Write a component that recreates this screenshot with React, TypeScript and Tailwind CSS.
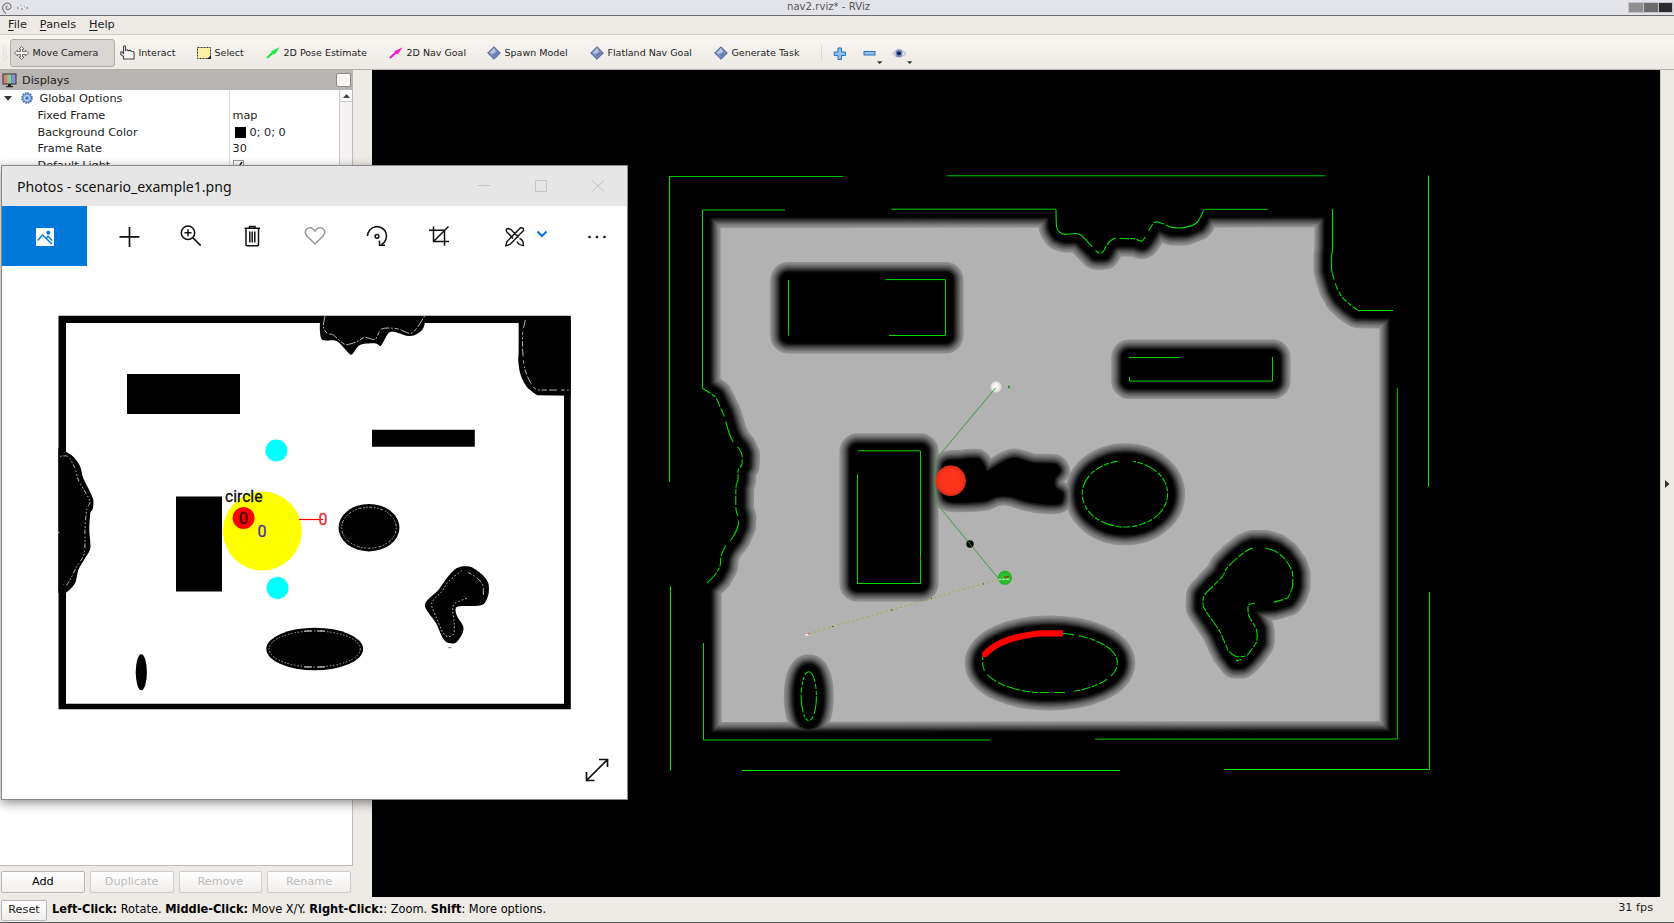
import React from "react";

type Pt = [number, number];

/* Catmull-Rom smoothing through a list of points. */
function smooth(pts: Pt[], closed = false): string {
  const n = pts.length;
  const at = (i: number): Pt =>
    closed ? pts[(i + n) % n] : pts[Math.max(0, Math.min(n - 1, i))];
  let d = `M${pts[0][0]} ${pts[0][1]}`;
  const last = closed ? n : n - 1;
  for (let i = 0; i < last; i++) {
    const [a, b, c, e] = [at(i - 1), at(i), at(i + 1), at(i + 2)];
    const k = 7;
    d += `C${b[0] + (c[0] - a[0]) / k} ${b[1] + (c[1] - a[1]) / k} ${c[0] - (e[0] - b[0]) / k} ${c[1] - (e[1] - b[1]) / k} ${c[0]} ${c[1]}`;
  }
  return closed ? d + "Z" : d;
}

/* ---------- costmap geometry ---------- */

const LEFT_COAST: Pt[] = [
  [707, 583], [715, 575], [720, 566], [721, 556], [725, 547], [733, 537], [738, 526], [738.5, 518],
  [736, 509], [736, 487], [738, 480], [738.3, 470], [741.7, 465], [742, 455], [739.3, 449],
  [733, 441.7], [728.7, 431.7], [725.3, 420], [723, 413], [720, 406.7], [715, 396.7], [702.5, 388.3],
];
const TOP_BLOB: Pt[] = [
  [1056, 209.5], [1056.6, 227], [1060, 232.5], [1065, 234.4], [1080, 234.5], [1097, 251.8],
  [1103, 251.8], [1107, 244.5], [1114, 238.6], [1127, 238.6], [1135, 238.8], [1142, 241], [1147, 234], [1154, 222.5],
  [1161, 223], [1172, 227.4], [1185, 227.4], [1197, 222.5], [1204, 209.5],
];
const CORNER: Pt[] = [
  [1332.5, 209], [1332.5, 248], [1331.6, 256], [1331.6, 270], [1334, 279], [1337, 288], [1342, 297], [1350, 304.5], [1358, 310.2], [1397.5, 310.5],
];
const line = (p: Pt[]) => p.map(([x, y]) => `L${x} ${y}`).join("");
const OUTSIDE =
  "M372 70H1660V897H372Z M702.5 209.7" +
  line(TOP_BLOB) + line(CORNER) + "L1397.5 739L703.5 740L703.5 585" + line(LEFT_COAST) + "Z";

const BEAN: Pt[] = [
  [1252.7, 548], [1246.7, 550.7], [1236.7, 558.3], [1226.7, 568.3], [1222.3, 576.7], [1213.3, 585.7],
  [1204, 596], [1203.7, 607.3], [1213.3, 621.7], [1220, 631.7], [1225, 643.3], [1229.3, 651.7],
  [1236, 656.5], [1246, 656], [1251.7, 649.3], [1256.7, 641.7], [1256.5, 630], [1250, 618.3], [1248.3, 613.3],
  [1248.5, 605], [1255, 603.3], [1273.5, 602.3], [1286.7, 598.3], [1290, 593.3], [1292.5, 586.7], [1292.5, 573.3],
  [1290, 566.7], [1283.3, 557.3], [1275, 551], [1265, 548],
];
const BEAN_OUTLINE: Pt[] = [...BEAN.slice(0, 12), [1236, 660.5], [1241, 660.5], ...BEAN.slice(13)];
const BEAN_LEFT = smooth(BEAN.slice(0, 21));
const BEAN_RIGHT = smooth(BEAN.slice(21));

const TRAIL = smooth(
  [
    [943.3, 463.3], [960, 459.5], [978, 458.5], [985, 466.5], [988, 471], [1003, 462], [1015, 458], [1033, 463],
    [1055, 464], [1060.5, 471], [1055, 478.5], [1055.3, 487], [1063, 493], [1061, 503], [1048, 504.5], [1027, 501.5],
    [1010, 496.5], [997, 496.5], [983, 501.5], [950, 502], [942, 493],
  ],
  true,
);

const LEVELS: { r: number; c: string }[] = [
  { r: 18, c: "#8e8e8e" }, { r: 16.8, c: "#848484" }, { r: 15.6, c: "#777777" }, { r: 14.4, c: "#676767" },
  { r: 13.2, c: "#555555" }, { r: 12, c: "#424242" }, { r: 10.8, c: "#2d2d2d" }, { r: 9.6, c: "#181818" },
  { r: 8.4, c: "#080808" }, { r: 7.2, c: "#000000" },
];

function Obstacles({ r, c }: { r: number; c: string }) {
  return (
    <g fill={c} stroke={c} strokeWidth={r * 2} strokeLinejoin="round">
      <path d={OUTSIDE} fillRule="evenodd" />
      <rect x="788.3" y="280" width="157.2" height="55.5" />
      <rect x="857.5" y="451.3" width="63" height="132.2" />
      <rect x="1129.3" y="357.5" width="143.2" height="23.5" />
      <ellipse cx="1125" cy="494.2" rx="42" ry="33" />
      <ellipse cx="1050" cy="663" rx="67.3" ry="29.5" />
      <ellipse cx="808.8" cy="696.4" rx="7" ry="24" />
      <path d={line(BEAN_OUTLINE).replace("L", "M") + "Z"} />
      <path d={TRAIL} strokeWidth={Math.max(0, (r - 8.4) * 2)} />
    </g>
  );
}

function Costmap() {
  return (
    <svg className="block h-full w-full bg-black" viewBox="372 70 1288 827">
      <defs>
        <radialGradient id="robot"><stop offset="0" stopColor="#ff3518" /><stop offset=".75" stopColor="#f8321b" /><stop offset="1" stopColor="#dc2c18" /></radialGradient>
        <radialGradient id="start"><stop offset="0" stopColor="#fff" /><stop offset=".6" stopColor="#ececec" /><stop offset="1" stopColor="#cfcfcf" /></radialGradient>
        <radialGradient id="goal"><stop offset="0" stopColor="#2fcb35" /><stop offset=".8" stopColor="#29bb2e" /><stop offset="1" stopColor="#259c29" /></radialGradient>
      </defs>
      <rect x="700" y="208" width="699" height="533" fill="#b2b2b2" />
      {LEVELS.map((l) => <Obstacles key={l.r} r={l.r} c={l.c} />)}
      <path d={OUTSIDE} fill="#000" fillRule="evenodd" />

      {/* laser map edges */}
      <g fill="none" stroke="#00d800" strokeWidth="1">
        <path stroke="#00e600" d="M669.5 481.7V176.4M1428.5 175.5V487M1429.5 592V769.5M670.5 586V770.8M742 770.5H1120M1224 769.5H1429.5" />
        <path stroke="#00c000" d="M669.5 176.5H843" />
        <path stroke="#00d000" d="M947 175.8H1325M702.5 210H785M891 209.2H1056M1204.5 209.3H1267.5M703.5 740H990M1095 739.1H1397.5" />
        <path stroke="#00e000" d="M702.5 210V388.3M703.5 643V740" />
        <path stroke="#00c800" d="M1397.4 388V739" />
        <path d="M788.5 280V335.5M885.5 279.6H945.5M945.5 280V335.5H889" />
        <path d="M858 450.8H920.7M920.5 451V583.5H857.5V474" />
        <path d="M1129 357.5H1180M1272.5 357V381M1272.5 381.1H1129.5V377" />
      </g>
      <g fill="none" stroke="#00dc00" strokeWidth="1.1">
        <path d={smooth(LEFT_COAST)} strokeDasharray="14 1.500 4 1.500 9 2 12 6 22 5 9 2 9 1.500 5 1.500" />
        <path d={smooth(TOP_BLOB)} strokeDasharray="62 5 5 1.500 9 1.500 11 4 9 1.500 5 1.500 11 7 8 1.500 11 2" />
        <path d={smooth(CORNER.slice(0, 9))} strokeDasharray="71 4 7 2 5 1.500 6 1.500 5 1.500 6 1.500" />
        <path d="M1358 310.5H1393" />
        <path d="M1117.5 461.4A43 33 0 0 0 1082.2 494A43 33 0 0 0 1125 527A43 33 0 0 0 1167.6 494A43 33 0 0 0 1133.5 461.4" strokeDasharray="7 2 5 1.500 8 1.500 5 2 14 1.500 6 1.500" />
        <path d="M1063 633.5A67.3 29.5 0 0 1 1117.3 663A67.3 29.5 0 0 1 1074 691.2M1065 692.5H1035A67.3 29.5 0 0 1 982.7 663V656" strokeDasharray="11 5 9 2 6 1.500 9 1.500 14 1.500 8 2" />
        <ellipse cx="808.8" cy="696.2" rx="7.6" ry="24.5" strokeDasharray="18 2 5 2 4 1.500 3 2" />
        <path d={BEAN_LEFT} strokeDasharray="9 1.500 6 1.500 12 1.500 5 1.500" />
        <path d={BEAN_RIGHT} strokeDasharray="10 1.500 8 1.500 14 2 6 1.500" />
        <path d="M1236 660.5H1239M1239.5 659.6H1241.5" strokeWidth="1.4" />
      </g>

      {/* active scan */}
      <path d="M985 654.3C995 643 1014 636 1040 633.4H1063" fill="none" stroke="#f00" strokeWidth="6.2" strokeLinejoin="round" />
      <circle cx="985" cy="654.2" r="3" fill="#f00" />

      {/* robot, start, goal */}
      <circle cx="996" cy="386.8" r="5.8" fill="url(#start)" />
      <path d="M995.5 388L938 457L935.3 464L934.6 470V492L937 504L998 578" fill="none" stroke="#2f9a35" strokeWidth=".9" />
      <circle cx="950.7" cy="480.8" r="15.2" fill="url(#robot)" />
      <path d="M934.6 470V492" stroke="#30a030" strokeWidth=".8" />
      <path d="M1008.3 385.3L1010 386L1009.3 388.5H1008.3Z" fill="#159015" />
      <circle cx="970" cy="544" r="3.7" fill="#000" />
      <path d="M968 541.5L972 546.5" stroke="#2f9a35" strokeWidth=".9" />
      <path d="M809 633.5L998 579.500" stroke="#b0a420" strokeWidth="1.100" strokeDasharray="1.600 3.400" />
      <path d="M832 626.5h1M891 610h1.3M931 598.5h1M983 584h1" stroke="#333" strokeWidth="1" />
      <path d="M805.5 634.8h3" stroke="#fff" strokeWidth="1.4" /><path d="M807.5 633.6h2" stroke="#e0457a" />
      <circle cx="1005" cy="577.7" r="7" fill="url(#goal)" />
      <path d="M998.5 579.4h11" stroke="#c8f5c8" strokeWidth="1" strokeDasharray="3 .8" />
      <path d="M1004 577.3L1009 576.3" stroke="#c02010" strokeWidth="1.2" />
      <path d="M919.5 558.5h2" stroke="#d00000" />
    </svg>
  );
}

/* ---------- picture shown in the photo viewer (authored at 3x) ---------- */

const P_LEFT: Pt[] = [[55, 445], [78, 455], [100, 470], [120, 498], [130, 535], [150, 575], [160, 600], [158, 628], [151, 640], [148, 690], [151, 745], [135, 775], [115, 810], [105, 850], [78, 878], [55, 878]];
const P_LEFT_DASH: Pt[] = [[60, 469], [85, 470], [105, 505], [115, 540], [135, 575], [150, 605], [140, 630], [135, 690], [133, 760], [110, 800], [95, 830], [80, 855], [70, 853]];
const P_TOP: Pt[] = [[60, 60], [60, 95], [68, 120], [110, 123], [148, 161], [158, 161], [180, 135], [225, 130], [243, 137], [265, 100], [285, 96], [320, 107], [345, 105], [368, 88], [377, 60]];
const P_TOP_DASH: Pt[] = [[75, 48], [70, 80], [82, 100], [100, 105], [135, 133], [170, 125], [195, 112], [225, 118], [245, 87], [290, 86], [330, 100], [350, 85], [374, 48]];
const P_CORNER: Pt[] = [[656, 60], [656, 150], [655, 185], [662, 225], [680, 260], [712, 286]];
const P_CORNER_DASH: Pt[] = [[676, 60], [668, 100], [668, 150], [674, 205], [690, 245], [708, 268], [740, 270], [812, 270]];
const P_BEAN: Pt[] = [[490, 799], [465, 808], [440, 835], [415, 870], [380, 903], [377, 925], [408, 970], [425, 1008], [440, 1027], [466, 1029], [485, 1005], [490, 980], [470, 945], [472, 920], [535, 917], [555, 908], [566, 880], [565, 850], [548, 825], [515, 802]];
const P_BEAN_DASH: Pt[] = [[485, 812], [445, 845], [425, 875], [395, 910], [410, 955], [430, 1000], [445, 1010], [462, 1000], [462, 960], [458, 930], [465, 910], [505, 893]];

function ScenarioPicture() {
  const ink = "#020203";
  return (
    <svg className="block h-full w-full" viewBox="2 266 625 533">
      <path d="M58.5 315.7H570.8V709.3H58.5ZM66 323V703.7H564V323Z" fill={ink} fillRule="evenodd" />
      <path d="M127 374h113v40H127zM176 496.5h46v95h-46zM372 429.8h102.8v17H372z" fill="#000" />
      <g transform="translate(40 300) scale(.33333)">
        <path d={smooth(P_LEFT)} fill={ink} />
        <path d={smooth(P_LEFT_DASH)} fill="none" stroke="#d4d4d4" strokeWidth="2.6" strokeDasharray="5 5 14 8 4 6" />
        <path d="M53 697h5" stroke="#ddd" strokeWidth="3" />
      </g>
      <g transform="translate(300 300) scale(.33333)">
        <path d={smooth(P_TOP)} fill={ink} />
        <path d={smooth(P_CORNER) + "L812 287V60Z"} fill={ink} />
        <path d={smooth(P_BEAN, true)} fill={ink} />
        <g fill="none" stroke="#d4d4d4" strokeWidth="2.6">
          <path d={smooth(P_TOP_DASH)} strokeDasharray="28 5 5 6 12 6" />
          <path d={smooth(P_CORNER_DASH)} strokeDasharray="24 12 10 8 5 5 16 6" />
          <path d={smooth(P_BEAN_DASH)} strokeDasharray="5 6" />
          <path d="M550 885V860Q542 835 505 818" strokeDasharray="20 8 5 6" />
          <path d="M445 1043h8" stroke="#555" />
        </g>
      </g>
      <g fill={ink}>
        <ellipse cx="369" cy="527.7" rx="30.5" ry="23.7" />
        <ellipse cx="314.7" cy="649" rx="48.4" ry="21.3" />
        <ellipse cx="141.3" cy="672.3" rx="5.6" ry="18" />
      </g>
      <g fill="none" stroke="#bdbdbd" strokeWidth=".9">
        <ellipse cx="369" cy="527.7" rx="27.3" ry="20.5" strokeDasharray="1.5 1.5 3 2 1.5 1.5" />
        <ellipse cx="314.7" cy="649" rx="45.6" ry="18" strokeDasharray="1.5 1.5 1.5 2" />
        <path d="M304.5 631h7M317.5 631h7M304.5 667h7M317.5 667h7" stroke="#eee" strokeWidth="1.1" />
      </g>
      <circle cx="276.4" cy="450.5" r="11" fill="#0ff" />
      <circle cx="277.5" cy="588" r="11" fill="#0ff" />
      <circle cx="262.3" cy="531" r="39.4" fill="#ff0" />
      <circle cx="243.6" cy="518" r="11" fill="#f00" />
      <path d="M299 519.5H323" stroke="#f00" strokeWidth="1.2" />
      <g fontFamily="Roboto, sans-serif" fontSize="16" strokeWidth=".3">
        <text x="225" y="501.8" textLength="37.5" lengthAdjust="spacingAndGlyphs" fill="#0b0b0b" stroke="#0b0b0b">circle</text>
        <text x="239" y="523.8" fill="#3a0000" stroke="#3a0000">0</text>
        <text x="257.5" y="536.8" fill="#4334a0" stroke="#4334a0">0</text>
        <text x="318.5" y="524.6" fill="#e32d2d" stroke="#e32d2d">0</text>
      </g>
    </svg>
  );
}

/* ---------- photo viewer ---------- */

const stroke = { fill: "none", stroke: "#111", strokeWidth: 1.5 } as const;

function PhotosToolbar() {
  return (
    <div className="flex h-[60px] shrink-0 items-start">
      <div className="flex h-[60px] w-[85px] items-center justify-center bg-[#0078d9] pt-[2px]">
        <svg width="18" height="18" viewBox="0 0 18 18">
          <rect width="18" height="18" rx="1" fill="#fff" />
          <path d="M1.7 12.5L6.5 7L16 16M10 10.5L12 8.3L16.3 12.5" fill="none" stroke="#0078d9" strokeWidth="1.4" />
          <circle cx="12.3" cy="4.7" r="2" fill="#0078d9" />
        </svg>
      </div>
      <svg className="block" width="540" height="60" viewBox="87 206 540 60">
        <g {...stroke}>
          <path d="M119.5 236.8H139.5M129.5 227V247" strokeWidth="1.7" />
          <circle cx="188" cy="232.7" r="6.7" /><path d="M192.8 237.6L200.7 245.6M184.5 232.7h7M188 229.2v7" />
          <path d="M244.5 228.3H260M249.5 228V226.5H255V228M246 228.5V244.8Q246 245.7 247 245.7H257.5Q258.5 245.7 258.5 244.8V228.5M249.8 231.5V242.5M252.2 231.5V242.5M254.8 231.5V242.5" />
          <path d="M315 244L307 236Q303.8 232 306.5 229Q311 225.5 315 231Q319 225.5 323.5 229Q326.2 232 323 236Z" stroke="#999" />
          <path d="M367.5 236A9.5 9.5 0 1 1 381.5 244.5M379.5 240.5V245.2H385" />
          <circle cx="377" cy="236.3" r="1.9" />
          <path d="M429 230.3H444.5V245.8M433.5 226.5V241.5H449M434 241L448.5 226.5" />
          <path d="M506.500 231.500Q505.500 228.500 508.500 228.500L511 229.500L518.500 237.500M513 238.500L506.500 231.500M519.500 238.500Q523.500 239.500 523.500 245.500Q519 245.500 517 241.500M523.500 230.500L510 244.500L505.800 245.800L507 241.500L520.500 227.800Q524 227.500 523.500 230.500Z" strokeWidth="1.4" />
          <path d="M537.5 231.5L542 236L546.5 231.500" stroke="#0078d9" strokeWidth="2" />
        </g>
        <g fill="#111"><circle cx="589.5" cy="237" r="1.3" /><circle cx="597" cy="237" r="1.3" /><circle cx="604.5" cy="237" r="1.3" /></g>
      </svg>
    </div>
  );
}

function PhotosWindow() {
  return (
    <div className="absolute left-[1px] top-[165px] flex h-[635px] w-[627px] flex-col border border-[#8a8a8a] bg-white font-['Noto_Sans',sans-serif] shadow-[0_3px_10px_rgba(0,0,0,0.45)]">
      <div className="flex h-[40px] shrink-0 items-center justify-between bg-[#e6e6e6] pl-[15px]">
        <span className="whitespace-nowrap pt-[2px] text-[14.1px] text-[#111]">Photos - scenario_example1.png</span>
        <svg width="150" height="40" viewBox="477 166 150 40" fill="none" stroke="#c4c4c4">
          <path d="M478 185.5H490M535.5 180.5H546.5V191.5H535.5ZM592 180.5L604 191.5M604 180.5L592 191.5" />
        </svg>
      </div>
      <PhotosToolbar />
      <div className="relative min-h-0 flex-1">
        <ScenarioPicture />
        <svg className="absolute bottom-[17px] right-[18px]" width="24" height="24" viewBox="0 0 24 24" {...stroke} strokeWidth={1.7}>
          <path d="M2 22L22 2M14 1.5H22.5V9M1.5 14V22.5H9.5" />
        </svg>
      </div>
    </div>
  );
}

/* ---------- RViz chrome ---------- */

const Gem = () => (
  <svg width="14" height="14" viewBox="0 0 14 14">
    <path d="M7 .7L13.3 7L7 13.3L.7 7Z" fill="#7d92c0" stroke="#3e4f7e" strokeWidth=".9" />
    <path d="M7 2L9 6L6 8L2.5 7Z" fill="#b7c4e2" /><path d="M9 6L12 7L7 12L6 8Z" fill="#6a80b3" />
  </svg>
);
const Arrow = ({ c }: { c: string }) => (
  <svg width="14" height="12" viewBox="0 0 14 12"><path d="M1 11L7 5.5" stroke={c} strokeWidth="2.2" /><path d="M5 4.6L13.7 .3L8.6 7.6Z" fill={c} /></svg>
);
const Move = () => (
  <svg width="15" height="14" viewBox="0 0 15 14" fill="#f4f4f4" stroke="#555" strokeWidth=".8">
    <path d="M7.5 .5L10 3H8.5V5.5H11.5V4L14.5 7L11.5 10V8.5H8.5V11H10L7.5 13.5L5 11H6.5V8.5H3.5V10L.5 7L3.5 4V5.5H6.5V3H5Z" />
  </svg>
);
const Hand = () => (
  <svg width="15" height="15" viewBox="0 0 15 15"><path d="M3.5 9V1.5Q4.5 .3 5.5 1.5V5.5L7 4.8L8.500 5.800L10 5.2L11.5 6.2L13.5 6.5Q14.5 8 14 11V14H3.5V11.5L.8 9.5V7H2.500Z" fill="#f5f5f5" stroke="#444" strokeWidth="1.1" /></svg>
);
const SelectIcon = () => (
  <svg width="14" height="12" viewBox="0 0 14 12"><rect x=".5" y=".5" width="13" height="11" fill="#fbf0a4" stroke="#333" strokeDasharray="2 1" /><path d="M14 8V12H10Z" fill="#222" /></svg>
);

function Tool({ icon, label, className }: { icon: React.ReactNode; label: string; className: string }) {
  return (
    <div className={`flex h-[28px] shrink-0 items-center gap-[3.5px] whitespace-nowrap text-[9.5px] ${className}`}>
      {icon}
      <span className="pt-px">{label}</span>
    </div>
  );
}

function Toolbar() {
  return (
    <div className="flex h-[35px] shrink-0 items-center border-b border-[#b4b1ad] bg-linear-to-b from-[#f9f6f1] to-[#edeae6] pt-px">
      <svg className="ml-[3px] mr-[3px] shrink-0" width="4" height="16" viewBox="0 0 4 16">
        <path d="M.5 0V16M3 1V16" stroke="#cfcbc6" strokeDasharray="1 1.500" />
      </svg>
      <Tool icon={<Move />} label="Move Camera" className="w-[105px] rounded-[3px] border border-[#b0aca8] bg-[#dad6d3] pl-[3px]" />
      <Tool icon={<Hand />} label="Interact" className="w-[77px] pl-[5px]" />
      <Tool icon={<SelectIcon />} label="Select" className="w-[69px] pl-[5px]" />
      <Tool icon={<Arrow c="#18e53a" />} label="2D Pose Estimate" className="w-[123px] pl-[5px]" />
      <Tool icon={<Arrow c="#f016c8" />} label="2D Nav Goal" className="w-[99px] pl-[5px]" />
      <Tool icon={<Gem />} label="Spawn Model" className="w-[103px] pl-[4px]" />
      <Tool icon={<Gem />} label="Flatland Nav Goal" className="w-[124px] pl-[4px]" />
      <Tool icon={<Gem />} label="Generate Task" className="w-[111px] pl-[4px]" />
      <div className="h-[16px] w-px bg-[#dcd8d4]" />
      <svg width="100" height="28" viewBox="822.5 38 100 28">
        <path d="M838.5 47H842V51H846V54.5H842V58.5H838.5V54.5H834.7V51H838.5Z" fill="#8fc0ee" stroke="#2f6fb5" />
        <rect x="864.5" y="50.5" width="11" height="3.5" fill="#8fc0ee" stroke="#2f6fb5" />
        <path d="M877.5 60.2H883L880.2 63ZM907.5 60.2H913L910.2 63Z" fill="#333" />
        <path d="M893 52.5Q899.5 44.5 906.5 52.5Q899.5 60 893 52.5Z" fill="#eee" stroke="#b0b0b8" />
        <circle cx="899.5" cy="52.3" r="3.6" fill="#6f86c2" /><circle cx="899.5" cy="52.3" r="1.9" fill="#141b45" />
      </svg>
    </div>
  );
}

function Row({ name, children }: { name: string; children?: React.ReactNode }) {
  return (
    <div className="flex h-[16.67px] items-center">
      <div className="flex h-full w-[230px] shrink-0 items-center border-r border-[#dedede] pl-[37.5px] pt-px">{name}</div>
      <div className="flex items-center pl-[2.5px] pt-px">{children}</div>
    </div>
  );
}

function DisplaysPanel() {
  const button = "flex h-[22px] flex-1 items-center justify-center rounded-[2px] border bg-linear-to-b from-white to-[#f1efed]";
  return (
    <div className="flex w-[353px] shrink-0 flex-col">
      <div className="flex h-[20px] shrink-0 items-center bg-[#b8b4b1] pl-[2px] pr-[2px]">
        <svg width="15" height="15" viewBox="0 0 15 15">
          <rect x=".5" y=".5" width="14" height="11" fill="#333" />
          <path d="M1.500 1.500h4.500v9H1.500z" fill="#d98080" /><path d="M5.500 1.500h4v9h-4z" fill="#84d08a" /><path d="M9.500 1.500h4v9h-4z" fill="#8d8ee0" />
          <path d="M6 11h3v2h2v1.3H4V13h2z" fill="#222" />
        </svg>
        <span className="ml-[5px] pt-px">Displays</span>
        <div className="ml-auto h-[14px] w-[15px] rounded-[2px] border border-[#8f8c89] bg-[#f6f5f4]" />
      </div>
      <div className="flex min-h-0 flex-1 border-b border-r border-[#bcbab8] bg-white">
        <div className="flex-1">
          <div className="flex h-[16.67px] items-center">
            <div className="flex h-full w-[230px] items-center border-r border-[#dedede] pl-[4px]">
              <svg width="8" height="5" viewBox="0 0 8 5"><path d="M0 0H8L4 4.7Z" fill="#333" /></svg>
              <svg className="ml-[9px]" width="12" height="12" viewBox="0 0 12 12">
                <circle cx="6" cy="6" r="5" fill="#79a3dd" stroke="#3f6db5" strokeDasharray="1.6 1" strokeWidth="1.6" />
                <circle cx="6" cy="6" r="2.6" fill="none" stroke="#dce9fa" strokeWidth=".8" /><circle cx="6" cy="6" r="1.1" fill="#3465ad" />
              </svg>
              <span className="ml-[6.5px] pt-px">Global Options</span>
            </div>
          </div>
          <Row name="Fixed Frame">map</Row>
          <Row name="Background Color"><span className="ml-[2px] mr-[4px] h-[11px] w-[11px] bg-black" />0; 0; 0</Row>
          <Row name="Frame Rate">30</Row>
          <Row name="Default Light">
            <svg width="11" height="11" viewBox="0 0 11 11"><rect x=".5" y=".5" width="10" height="10" fill="#fff" stroke="#999" /><path d="M3 5L5 8L9 2" fill="none" stroke="#222" strokeWidth="1.5" /></svg>
          </Row>
        </div>
        <div className="h-[700px] w-[13px] border-l border-[#c9c7c5] bg-[#f4f3f2]">
          <div className="flex h-[12px] items-center justify-center border-b border-[#c9c7c5] bg-[#fafafa]">
            <svg width="7" height="4" viewBox="0 0 7 4"><path d="M0 4H7L3.5 0Z" fill="#444" /></svg>
          </div>
        </div>
      </div>
      <div className="flex h-[31px] shrink-0 items-start gap-[5px] pl-px pr-[2px] pt-[5px]">
        <div className={`${button} border-[#b9b6b3] text-black`}>Add</div>
        <div className={`${button} border-[#cfccc9] text-[#bdbbb9]`}>Duplicate</div>
        <div className={`${button} border-[#cfccc9] text-[#bdbbb9]`}>Remove</div>
        <div className={`${button} border-[#cfccc9] text-[#bdbbb9]`}>Rename</div>
      </div>
    </div>
  );
}

export default function App() {
  return (
    <div className="relative flex h-[923px] w-[1674px] flex-col overflow-hidden bg-[#eeebe7] font-['DejaVu_Sans',sans-serif] text-[11.25px] leading-none text-[#1c1c1c]">
      <div className="flex h-[16px] shrink-0 items-center border-b border-[#6b6b6b] bg-[#e3e4ea] pl-[2px] pr-[1px]">
        <svg width="10" height="12" viewBox="0 0 10 12" fill="none" stroke="#777" strokeWidth="1.1"><path d="M4 11.5Q-.5 8 1 4Q3 .5 6.5 1Q9.7 2.5 9 5.5Q7 8.5 4.5 7.2Q3.3 5 5.5 3.8" /></svg>
        <svg className="ml-[5px]" width="12" height="5" viewBox="0 0 12 5"><path d="M0 3h2M3 1h1M4 4h2M7 2h1M9 3h2" stroke="#777" /><path d="M2 2h2M6 3h2M8 1h1" stroke="#fff" /></svg>
        <span className="ml-[758px] text-[10.15px] text-[#555]">nav2.rviz* - RViz</span>
        <div className="ml-auto flex gap-px border border-[#c4c4c8] bg-[#c4c4c8]">
          <div className="h-[9px] w-[14px] bg-[#909090]" />
          <div className="h-[9px] w-[14px] bg-[#6b6b6b]" />
          <div className="h-[9px] w-[13px] bg-[#2c2c2c]" />
        </div>
      </div>
      <div className="flex h-[19px] shrink-0 items-center gap-[13px] border-b border-[#cfccc7] pl-[8px] text-[11.25px]">
        <span><span className="underline underline-offset-2">F</span>ile</span>
        <span><span className="underline underline-offset-2">P</span>anels</span>
        <span><span className="underline underline-offset-2">H</span>elp</span>
      </div>
      <Toolbar />
      <div className="flex h-[827px] shrink-0">
        <DisplaysPanel />
        <div className="w-[19px] shrink-0" />
        <div className="w-[1288px] shrink-0"><Costmap /></div>
        <div className="flex flex-1 items-center border-l border-[#c9c6c1] pl-[4px]">
          <svg width="5" height="8" viewBox="0 0 5 8"><path d="M0 0L4.5 4L0 8Z" fill="#333" /></svg>
        </div>
      </div>
      <div className="flex min-h-0 flex-1 items-center border-b border-[#555] pl-px pr-[21px]">
        <div className="mt-px flex h-[21px] w-[46px] items-center justify-center rounded-[2px] border border-[#b9b6b3] bg-linear-to-b from-white to-[#f1efed]">Reset</div>
        <div className="ml-[5px] mt-px whitespace-pre text-[11.39px] text-black"><b>Left-Click:</b> Rotate. <b>Middle-Click:</b> Move X/Y. <b>Right-Click:</b>: Zoom. <b>Shift</b>: More options.</div>
        <div className="mb-[3px] ml-auto">31 fps</div>
      </div>
      <PhotosWindow />
    </div>
  );
}
